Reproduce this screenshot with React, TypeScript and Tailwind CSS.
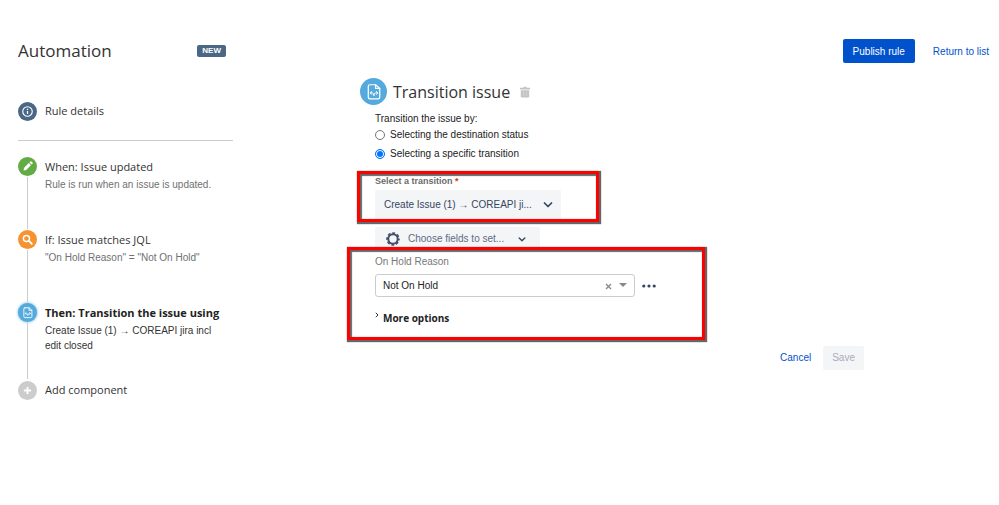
import { useState } from 'react';
import type { ReactNode } from 'react';

interface Step {
  id: string;
  color: string;
  title: string;
  description?: string;
  icon: ReactNode;
  active?: boolean;
}

const PencilIcon = () => (
  <svg viewBox="0 0 20 20" className="w-full h-full" fill="#fff">
    <path d="M12 5.7l2.3 2.3 1-1a.8.8 0 0 0 0-1.1l-1.2-1.2a.8.8 0 0 0-1.1 0zM11.3 6.4l2.3 2.3-4.9 4.9-2.9.7.6-3z" />
  </svg>
);

const SearchIcon = () => (
  <svg viewBox="0 0 20 20" className="w-full h-full" fill="none" stroke="#fff" strokeLinecap="round">
    <circle cx="8.9" cy="8.9" r="3.2" strokeWidth="1.5" />
    <path d="M11.5 11.5l3 3" strokeWidth="2" />
  </svg>
);

const PlusIcon = () => (
  <svg viewBox="0 0 20 20" className="w-full h-full" stroke="#fff" strokeWidth="2" strokeLinecap="round">
    <path d="M10 7v6M7 10h6" />
  </svg>
);

const InfoIcon = () => (
  <svg viewBox="0 0 20 20" className="w-full h-full" fill="none" stroke="#fff">
    <circle cx="10" cy="10" r="5" strokeWidth="1.2" />
    <path d="M10 9.4v3.3M10 7.2v1.2" strokeWidth="1.3" />
  </svg>
);

const TransitionIcon = () => (
  <svg viewBox="0 0 26 26" className="w-full h-full" fill="none" stroke="#fff" strokeLinejoin="round" strokeLinecap="round">
    <path d="M9.5 6.5H15L19 10v8.5a1.5 1.5 0 0 1-1.5 1.5h-8A1.5 1.5 0 0 1 8 18.5V8a1.5 1.5 0 0 1 1.5-1.5z" strokeWidth="1.2" />
    <path d="M15 6.5V10h4" strokeWidth="1.2" />
    <path d="M11.3 13L9.8 14.3l1.5 1.5M10 14.3h1.8q1.5 0 1.5 2.4M15.700 13l1.500 1.300-1.500 1.500M17 14.300h-1.800q-1.700 0-1.700 2.400" strokeWidth=".9" />
  </svg>
);

const TrashIcon = () => (
  <svg viewBox="0 0 10 12" className="w-[10px] h-3" fill="#c4c4c4">
    <path d="M3.5.8h3v1H10v1.7H0V1.8h3.5z" />
    <path d="M.8 4.2h8.4v6.3a1 1 0 0 1-1 1H1.8a1 1 0 0 1-1-1z" />
    <path d="M3.5 5.5V10M6.5 5.5V10" stroke="#dedede" strokeWidth=".6" />
  </svg>
);

const GearIcon = () => (
  <svg viewBox="0 0 14 14" className="w-[14px] h-[14px]" fill="none" stroke="#42526e">
    <circle cx="7" cy="7" r="4.7" strokeWidth="2" />
    <circle cx="7" cy="7" r="5.9" strokeWidth="1.8" strokeDasharray="2.8 1.834" strokeDashoffset="1.4" />
  </svg>
);

const Chevron = ({ className }: { className: string }) => (
  <svg viewBox="0 0 10 6" className={className} fill="none" stroke="#344563" strokeWidth="1.7" strokeLinecap="round" strokeLinejoin="round">
    <path d="M1.5 1L5 4.5 8.5 1" />
  </svg>
);

const steps: Step[] = [
  {
    id: 'when',
    color: 'bg-[#63ab45]',
    title: 'When: Issue updated',
    description: 'Rule is run when an issue is updated.',
    icon: <PencilIcon />,
  },
  {
    id: 'if',
    color: 'bg-[#f79232]',
    title: 'If: Issue matches JQL',
    description: '"On Hold Reason" = "Not On Hold"',
    icon: <SearchIcon />,
  },
  {
    id: 'then',
    color: 'bg-[#55aadd]',
    title: 'Then: Transition the issue using',
    description: 'Create Issue (1) → COREAPI jira incl edit closed',
    icon: <TransitionIcon />,
    active: true,
  },
];

const radioOptions = [
  { id: 'by-status', label: 'Selecting the destination status' },
  { id: 'by-transition', label: 'Selecting a specific transition' },
];

const radioClass =
  'appearance-none w-[10px] h-[10px] rounded-full border border-[#767676] bg-white checked:border-[#0075ff] checked:bg-[#0075ff] checked:shadow-[inset_0_0_0_1px_#fff]';

function Highlight({ className }: { className: string }) {
  return (
    <div
      className={`absolute pointer-events-none border-[3px] border-[#fe0000] shadow-[1px_1px_1px_1px_#666,inset_1px_1px_1px_1px_#666] ${className}`}
    />
  );
}

function Sidebar() {
  return (
    <aside className="w-[215px] shrink-0 pt-[23px] font-['Open_Sans',sans-serif] text-[11px] text-[#333]">
      <button className="flex items-center gap-2">
        <span className="w-[19px] h-[19px] rounded-full bg-[#4a6785]">
          <InfoIcon />
        </span>
        <span className="leading-5">Rule details</span>
      </button>
      <hr className="mt-[19px] mb-4 border-[#ccc]" />

      {steps.map((step) => (
        <div key={step.id} className="flex gap-2 min-h-[73px]">
          <div className="flex flex-col items-center w-[19px] shrink-0">
            <span
              className={`w-[19px] h-[19px] shrink-0 rounded-full ${step.color} ${step.active ? 'shadow-[0_0_3px_#55aadd]' : ''}`}
            >
              {step.icon}
            </span>
            <span className="w-px grow my-px bg-[#ccc]" />
          </div>
          <div className="pb-[27px]">
            <h3 className={`leading-5 whitespace-nowrap ${step.active ? 'font-bold text-[#222]' : ''}`}>{step.title}</h3>
            <p
              className={`max-w-[176px] font-['Liberation_Sans',sans-serif] text-[10px] leading-[15px] ${step.active ? 'text-[#333]' : 'text-[#707070]'}`}
            >
              {step.description}
            </p>
          </div>
        </div>
      ))}

      <button className="flex items-center gap-2">
        <span className="w-[19px] h-[19px] rounded-full bg-[#ccc]">
          <PlusIcon />
        </span>
        <span className="leading-5">Add component</span>
      </button>
    </aside>
  );
}

function TransitionForm() {
  const [mode, setMode] = useState('by-transition');

  return (
    <main className="grow">
      <div className="flex items-center gap-[6px] h-[27px]">
        <span className="w-[27px] h-[27px] rounded-full bg-[#55aadd]">
          <TransitionIcon />
        </span>
        <h2 className="font-['Open_Sans',sans-serif] text-base text-[#333]">Transition issue</h2>
        <button aria-label="Delete component" className="ml-1">
          <TrashIcon />
        </button>
      </div>

      <form className="pl-[15px] text-[10px] leading-4 text-[#222]">
        <fieldset className="mt-[6px]">
          <legend>Transition the issue by:</legend>
          <div className="flex flex-col gap-[3px]">
            {radioOptions.map((option) => (
              <label key={option.id} htmlFor={option.id} className="flex items-center gap-[5px]">
                <input
                  type="radio"
                  id={option.id}
                  name="mode"
                  className={radioClass}
                  checked={mode === option.id}
                  onChange={() => setMode(option.id)}
                />
                {option.label}
              </label>
            ))}
          </div>
        </fieldset>

        <div className="relative mt-[11px]">
          <label htmlFor="transition" className="block text-[9px] leading-4 font-bold text-[#6b6b6b]">
            Select a transition<span className="text-[#de350b]"> *</span>
          </label>
          <div className="relative mt-px w-[186px]">
            <select id="transition" className="appearance-none w-full h-[29px] pl-[9px] rounded-xs bg-[#f4f5f7] text-[#344563]">
              <option>Create Issue (1) → COREAPI ji...</option>
            </select>
            <Chevron className="absolute right-2 top-3 w-[10px] h-[6px] pointer-events-none" />
          </div>
          <Highlight className="-left-[18px] -top-[2px] w-[242px] h-[51px]" />
        </div>

        <button
          type="button"
          className="flex items-center mt-2 w-[165px] h-6 pl-[11px] rounded-xs bg-[#f4f5f7] text-[#5e6c84]"
        >
          <GearIcon />
          <span className="ml-2">Choose fields to set...</span>
          <Chevron className="ml-[14px] w-2 h-[5px]" />
        </button>

        <div className="relative mt-[3px]">
          <label htmlFor="reason" className="block text-[#777]">
            On Hold Reason
          </label>
          <div className="flex items-center gap-[7px] mt-1">
            <div className="relative w-[260px]">
              <select id="reason" className="block appearance-none w-full h-[23px] pl-[7px] rounded-[3px] border border-[#ccc] bg-white">
                <option>Not On Hold</option>
              </select>
              <button type="button" aria-label="Clear" className="absolute right-[23px] top-[9px]">
                <svg viewBox="0 0 7 7" className="block w-[7px] h-[7px]" stroke="#888" strokeWidth="1.3">
                  <path d="M1 1l5 5M6 1L1 6" />
                </svg>
              </button>
              <svg viewBox="0 0 8 4" className="absolute right-2 top-[9px] w-2 h-1 pointer-events-none" fill="#888">
                <path d="M0 0h8L4 4z" />
              </svg>
            </div>
            <button type="button" aria-label="Field options">
              <svg viewBox="0 0 14 4" className="block w-[14px] h-1" fill="#344563">
                <circle cx="1.8" cy="2" r="1.6" />
                <circle cx="7" cy="2" r="1.6" />
                <circle cx="12.2" cy="2" r="1.6" />
              </svg>
            </button>
          </div>
          <button type="button" className="flex gap-1 mt-[13px] font-['Open_Sans',sans-serif] leading-4 font-bold">
            <svg viewBox="0 0 4 6" className="w-1 h-[6px] mt-[2px]" fill="none" stroke="#333">
              <path d="M.8.8L3 3 .8 5.2" />
            </svg>
            More options
          </button>
          <Highlight className="-left-7 -top-[7px] w-[358px] h-[93px]" />
        </div>

        <div className="flex justify-end gap-3 mt-5">
          <button type="button" className="text-[#0052cc]">
            Cancel
          </button>
          <button type="submit" disabled className="h-6 px-[9px] rounded-xs bg-[#f4f5f7] text-[#a5adba]">
            Save
          </button>
        </div>
      </form>
    </main>
  );
}

export default function App() {
  return (
    <div className="min-h-screen bg-white pt-[39px] pl-[18px] pr-[10px] font-['Liberation_Sans',sans-serif] text-[10px]">
      <header className="flex items-center justify-between h-6">
        <div className="flex items-center justify-between w-[208px]">
          <h1 className="font-['Open_Sans',sans-serif] text-[17px] text-[#333]">Automation</h1>
          <span className="px-[5px] rounded-xs bg-[#4a6785] text-[8px] leading-3 font-bold text-white">NEW</span>
        </div>
        <div className="flex items-center gap-[18px]">
          <button className="h-6 px-[10px] rounded-xs bg-[#0052cc] text-white">Publish rule</button>
          <a href="#list" className="text-[#0052cc]">
            Return to list
          </a>
        </div>
      </header>

      <div className="flex gap-[127px] mt-[15px] pr-[125px]">
        <Sidebar />
        <TransitionForm />
      </div>
    </div>
  );
}
